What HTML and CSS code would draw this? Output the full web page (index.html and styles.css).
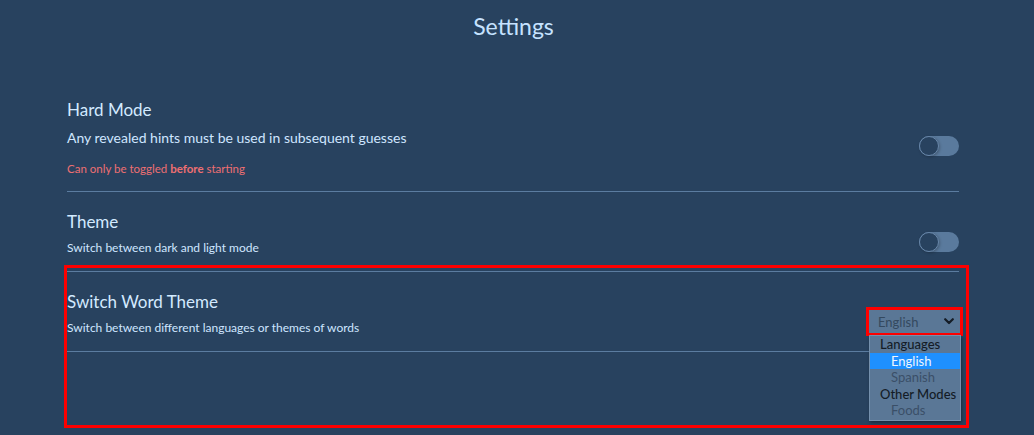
FILE: index.html
```html
<!DOCTYPE html>
<html>
<head>
<meta charset="utf-8">
<link rel="stylesheet" href="styles.css">
</head>
<body>
<div class="page">
  <h1 class="title">Settings</h1>
  <div class="settings">
    <div class="row row-hard">
      <div class="text">
        <div class="heading">Hard Mode</div>
        <div class="desc desc-lg">Any revealed hints must be used in subsequent guesses</div>
        <div class="note">Can only be toggled <b>before</b> starting</div>
      </div>
      <div class="toggle"><span class="knob"></span></div>
    </div>
    <div class="row">
      <div class="text">
        <div class="heading">Theme</div>
        <div class="desc">Switch between dark and light mode</div>
      </div>
      <div class="toggle"><span class="knob"></span></div>
    </div>
    <div class="row">
      <div class="text">
        <div class="heading">Switch Word Theme</div>
        <div class="desc">Switch between different languages or themes of words</div>
      </div>
      <div class="select-wrap">
        <div class="select">
          <span class="select-value">English</span>
          <svg class="chev" width="10" height="7" viewBox="0 0 10 7"><path d="M1.2 1.2 L5 5 L8.8 1.2" fill="none" stroke="#141c26" stroke-width="2.2" stroke-linecap="round" stroke-linejoin="round"/></svg>
        </div>
        <div class="dropdown">
          <div class="opt group">Languages</div>
          <div class="opt item selected">English</div>
          <div class="opt item">Spanish</div>
          <div class="opt group">Other Modes</div>
          <div class="opt item">Foods</div>
        </div>
      </div>
    </div>
    <div class="highlight-box"></div>
  </div>
</div>
</body>
</html>
```
FILE: styles.css
```css
html, body {
  margin: 0;
  padding: 0;
  background: #28425f;
  height: 100%;
}
body {
  font-family: "Lato", "Noto Sans", sans-serif;
  color: #cfe6ff;
  overflow: hidden;
}
.page {
  display: flex;
  flex-direction: column;
}
.title {
  margin: 11px 0 0;
  font-size: 23px;
  line-height: 30px;
  font-weight: 400;
  text-align: center;
  color: #c6e2ff;
  padding-right: 7px;
}
.settings {
  position: relative;
  margin: 38px 0 0 67px;
  width: 892px;
}
.row {
  display: flex;
  align-items: center;
  justify-content: space-between;
  padding: 18px 0 14px;
  border-bottom: 1px solid #5b7ca0;
}
.row-hard {
  padding: 19px 0 14px;
}
.heading {
  font-size: 17px;
  line-height: 24px;
  color: #d3eaff;
}
.desc {
  margin-top: 5px;
  font-size: 12px;
  line-height: 18px;
  color: #cfe6ff;
}
.desc-lg {
  margin-top: 6px;
  font-size: 14px;
  line-height: 20px;
}
.note {
  margin-top: 13px;
  font-size: 11.5px;
  line-height: 16px;
  color: #ee6f72;
}
.note b {
  font-weight: 700;
}
.toggle {
  position: relative;
  width: 40px;
  height: 20px;
  margin-top: 16px;
  border-radius: 10px;
  background: #5a7a9d;
  flex: none;
}
.knob {
  position: absolute;
  left: 0;
  top: 0;
  width: 18px;
  height: 18px;
  border-radius: 50%;
  background: #28425f;
  border: 1px solid #6887aa;
  box-shadow: 1px 1px 3px rgba(0,0,0,0.25);
}
.select-wrap {
  position: relative;
  margin-top: 16px;
  margin-right: -1px;
  flex: none;
}
.select {
  width: 91px;
  height: 23px;
  box-sizing: border-box;
  background: #5a7796;
  outline: 3px solid #ff0000;
  display: flex;
  align-items: center;
  justify-content: space-between;
  padding: 0 6px 0 9px;
}
.select-value {
  font-size: 13px;
  color: #34495f;
}
.chev {
  display: block;
}
.dropdown {
  position: absolute;
  left: 0;
  top: 25px;
  width: 92px;
  box-sizing: border-box;
  background: #5a7796;
  border: 1px solid #7590ad;
  box-shadow: 1px 2px 3px rgba(0,0,0,0.35);
  padding: 0 0 1px;
}
.opt {
  height: 16.5px;
  line-height: 16.5px;
  font-size: 13px;
  white-space: nowrap;
}
.group {
  color: #141c26;
  padding-left: 10px;
  font-weight: 500;
}
.item {
  color: #3a4f68;
  padding-left: 21px;
}
.item.selected {
  background: #1e90ff;
  color: #eef6ff;
}
.highlight-box {
  position: absolute;
  left: -3px;
  top: 186px;
  width: 905px;
  height: 163px;
  box-sizing: border-box;
  border: 3px solid #ff0000;
  pointer-events: none;
}
```
